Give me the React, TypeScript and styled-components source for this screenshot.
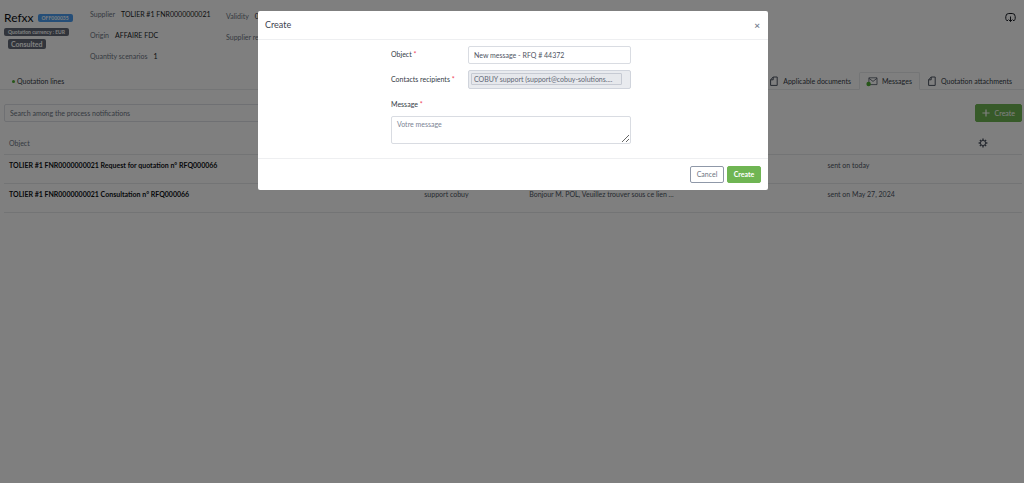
import React from "react";
import styled, { createGlobalStyle } from "styled-components";

const GlobalStyle = createGlobalStyle`
  *, *::before, *::after { box-sizing: border-box; }
  body {
    margin: 0;
    background: #fff;
    color: #3c4250;
    font-family: Lato, "Liberation Sans", sans-serif;
    font-size: 7px;
    line-height: 10px;
  }
  button, input, textarea { font: inherit; color: inherit; margin: 0; }
`;

const Page = styled.div`
  min-height: 100vh;
`;

const Header = styled.header`
  display: flex;
  align-items: flex-start;
  height: 72px;
  padding: 9px 8px 0 4px;
`;

const Identity = styled.div`
  width: 86px;
`;

const TitleRow = styled.div`
  display: flex;
  align-items: center;
  gap: 4px;
  height: 18px;
`;

const Title = styled.h1`
  margin: 0;
  font-size: 12px;
  line-height: 16px;
  font-weight: 400;
  color: #0c0f14;
`;

const Badge = styled.span<{ $tone?: "blue" | "dark"; $size?: "small" | "normal" }>`
  display: inline-block;
  padding: 0 ${(p) => (p.$size === "normal" ? 3 : 4)}px;
  border-radius: 2px;
  background: ${(p) => (p.$tone === "blue" ? "#4a9df0" : "#626976")};
  color: #fff;
  font-size: ${(p) => (p.$size === "normal" ? 7 : 5)}px;
  line-height: ${(p) => (p.$size === "normal" ? 10 : 8)}px;
  font-weight: 700;
  white-space: nowrap;
`;

const BadgeStack = styled.div`
  display: flex;
  flex-direction: column;
  align-items: flex-start;
  gap: 3px;
  padding-top: 1px;
`;

const Indent = styled.div`
  display: flex;
  padding-left: 4px;
`;

const Facts = styled.dl<{ $wide?: boolean; $low?: boolean }>`
  display: flex;
  flex-direction: column;
  gap: 11px;
  margin: 0;
  padding-top: ${(p) => (p.$low ? 2 : 0)}px;
  width: ${(p) => (p.$wide ? 136 : 120)}px;
`;

const Fact = styled.div`
  display: flex;
  gap: 6px;
  white-space: nowrap;
`;

const FactName = styled.dt`
  color: #6c7482;
`;

const FactValue = styled.dd`
  margin: 0;
  color: #181c24;
`;

const IconButton = styled.button`
  display: flex;
  margin: 3px 0 0 auto;
  padding: 0;
  border: 0;
  background: none;
  color: #181c24;
`;

const Tabs = styled.nav`
  display: flex;
  align-items: stretch;
  height: 18px;
  padding: 0 4px;
  border-bottom: 1px solid #e8eaed;
`;

const Tab = styled.a<{ $active?: boolean; $push?: boolean }>`
  display: flex;
  align-items: center;
  gap: 5px;
  height: 18px;
  margin-left: ${(p) => (p.$push ? "auto" : "0")};
  padding: 0 7px;
  border: 1px solid ${(p) => (p.$active ? "#e8eaed" : "transparent")};
  border-bottom-color: ${(p) => (p.$active ? "#fff" : "transparent")};
  border-radius: 2px 2px 0 0;
  color: #343a46;
  text-decoration: none;
  white-space: nowrap;
`;

const Dot = styled.span`
  width: 3px;
  height: 3px;
  margin-right: -3px;
  border-radius: 50%;
  background: #4fae32;
`;

const Toolbar = styled.div`
  display: flex;
  justify-content: space-between;
  padding: 14px 2px 0 4px;
`;

const SearchBox = styled.input`
  width: 36%;
  height: 18px;
  padding: 0 5px;
  border: 1px solid #dfe1e6;
  border-radius: 2px;
  background: #fff;
  &::placeholder { color: #6c7482; opacity: 1; }
`;

const Button = styled.button<{ $outline?: boolean; $compact?: boolean }>`
  display: flex;
  align-items: center;
  justify-content: center;
  gap: 5px;
  min-width: 34px;
  height: ${(p) => (p.$compact ? 17 : 18)}px;
  padding: 0 ${(p) => (p.$compact ? 4 : 6)}px ${(p) => (p.$compact ? 1 : 0)}px;
  border: 1px solid ${(p) => (p.$outline ? "#8f98a8" : "#6fb553")};
  border-radius: 2px;
  background: ${(p) => (p.$outline ? "#fff" : "#6fb553")};
  color: ${(p) => (p.$outline ? "#6c7482" : "#fff")};
  font-weight: ${(p) => (p.$compact && !p.$outline ? 700 : 400)};
`;

const Table = styled.table`
  width: calc(100% - 6px);
  margin: 10px 2px 0 4px;
  border-collapse: collapse;
  table-layout: fixed;
`;

const HeadCell = styled.th<{ $width?: string }>`
  width: ${(p) => p.$width ?? "auto"};
  height: 22px;
  padding: 0 5px;
  border-bottom: 1px solid #e6e8eb;
  color: #6c7482;
  font-weight: 400;
  text-align: left;
  svg { display: block; }
`;

const Cell = styled.td<{ $strong?: boolean }>`
  height: 29px;
  padding: 5px 5px 0;
  border-bottom: 1px solid #e6e8eb;
  color: ${(p) => (p.$strong ? "#0c0f14" : "#4d5462")};
  font-weight: ${(p) => (p.$strong ? 700 : 400)};
  vertical-align: top;
  white-space: nowrap;
`;

const Backdrop = styled.div`
  position: fixed;
  inset: 0;
  display: flex;
  align-items: flex-start;
  justify-content: center;
  padding: 11px 0 0 2px;
  background: rgba(0, 0, 0, 0.5);
`;

const Dialog = styled.section`
  width: 510px;
  max-width: 100%;
  border-radius: 2px;
  background: #fff;
`;

const DialogHeader = styled.div`
  display: flex;
  align-items: center;
  justify-content: space-between;
  height: 29px;
  padding: 0 8px 1px 7px;
  border-bottom: 1px solid #eeeff1;
`;

const DialogTitle = styled.h2`
  margin: 0;
  font-size: 9px;
  line-height: 14px;
  font-weight: 400;
`;

const CloseButton = styled.button`
  padding: 0;
  border: 0;
  background: none;
  color: #7b8494;
  font-size: 10px;
  line-height: 10px;
  font-weight: 700;
`;

const DialogBody = styled.div`
  display: flex;
  justify-content: center;
  padding: 6px 4px 14px 0;
`;

const Form = styled.form`
  display: flex;
  flex-direction: column;
  width: 240px;
`;

const FieldRow = styled.div`
  display: grid;
  grid-template-columns: 77px 1fr;
  align-items: center;
  margin-bottom: 6px;
`;

const Label = styled.label`
  padding-bottom: 2px;
  color: #343a46;
`;

const Star = styled.span`
  color: #f0405a;
`;

const TextInput = styled.input`
  width: 100%;
  height: 18px;
  padding: 0 5px;
  border: 1px solid #d9dce2;
  border-radius: 2px;
  background: #fff;
  color: #4d5462;
`;

const Recipients = styled.div`
  display: flex;
  align-items: center;
  height: 19px;
  padding: 0 2px 1px;
  border: 1px solid #d0d4dc;
  border-radius: 2px;
  background: #e9ebef;
`;

const Chip = styled.input`
  width: 151px;
  height: 12px;
  padding: 0 2px;
  border: 1px solid #c6cad3;
  border-radius: 1px;
  background: #e6e8ec;
  color: #5f6775;
`;

const MessageField = styled.div`
  display: flex;
  flex-direction: column;
  gap: 5px;
  padding-top: 4px;
`;

const MessageBox = styled.textarea`
  display: block;
  width: 100%;
  height: 28px;
  padding: 2px 5px;
  border: 1px solid #d9dce2;
  border-radius: 2px;
  &::placeholder { color: #7b8494; opacity: 1; }
`;

const DialogFooter = styled.div`
  display: flex;
  justify-content: flex-end;
  gap: 3px;
  padding: 7px;
  border-top: 1px solid #eeeff1;
`;

const DownloadIcon = () => (
  <svg width="11" height="11" viewBox="0 0 11 11" fill="none" stroke="currentColor" strokeWidth="1">
    <path d="M3 8.5H1.8Q.8 8 .8 6.6V4.6Q.8 1.5 3.8 1.5H7.2Q10.2 1.5 10.2 4.6V6.6Q10.2 8 9.2 8.5H8M5.5 4.5V9.5M3.6 7.5L5.5 9.5L7.4 7.5" />
  </svg>
);

const FileIcon = () => (
  <svg width="8" height="10" viewBox="0 0 8 10" fill="none" stroke="#4d5462" strokeWidth="1">
    <path d="M3.2 1H7.2V9.4H.6V3.8ZM3.2 1V3.8H.6" />
  </svg>
);

const MailIcon = () => (
  <svg width="10" height="10" viewBox="0 0 10 10" fill="none" overflow="visible">
    <path d="M1.9 1.8H10V8.6H1.9ZM1.9 2.3L6 5.4L10 2.3" stroke="#4d5462" strokeWidth="0.8" />
    <circle cx="1.6" cy="8" r="2.2" fill="#4fae32" />
  </svg>
);

const PlusIcon = () => (
  <svg width="8" height="8" viewBox="0 0 8 8" stroke="currentColor" strokeWidth="1.2">
    <path d="M4 .4V7.6M.4 4H7.6" />
  </svg>
);

const GearIcon = () => (
  <svg width="10" height="10" viewBox="0 0 10 10" fill="none" stroke="#4d5462">
    <circle cx="5" cy="5" r="2.6" strokeWidth="1" />
    <path d="M5 .6V2.4M5 7.6V9.4M.6 5H2.4M7.6 5H9.4M1.9 1.9L3.2 3.2M6.8 6.8L8.1 8.1M8.1 1.9L6.8 3.2M3.2 6.8L1.9 8.1" strokeWidth="1.4" />
  </svg>
);

const messages = [
  {
    object: "TOLIER #1 FNR0000000021 Request for quotation n° RFQ000066",
    from: "support cobuy",
    text: "Bonjour M. POL, Veuillez trouver sous ce lien ...",
    date: "sent on today",
  },
  {
    object: "TOLIER #1 FNR0000000021 Consultation n° RFQ000066",
    from: "support cobuy",
    text: "Bonjour M. POL, Veuillez trouver sous ce lien ...",
    date: "sent on May 27, 2024",
  },
];

export default function App() {
  return (
    <>
      <GlobalStyle />
      <Page>
        <Header>
          <Identity>
            <TitleRow>
              <Title>Refxx</Title>
              <Badge $tone="blue">OFF000035</Badge>
            </TitleRow>
            <BadgeStack>
              <Badge>Quotation currency : EUR</Badge>
              <Indent>
                <Badge $size="normal">Consulted</Badge>
              </Indent>
            </BadgeStack>
          </Identity>
          <Facts $wide>
            <Fact><FactName>Supplier</FactName><FactValue>TOLIER #1 FNR0000000021</FactValue></Fact>
            <Fact><FactName>Origin</FactName><FactValue>AFFAIRE FDC</FactValue></Fact>
            <Fact><FactName>Quantity scenarios</FactName><FactValue>1</FactValue></Fact>
          </Facts>
          <Facts $low>
            <Fact><FactName>Validity</FactName><FactValue>05/27/2024</FactValue></Fact>
            <Fact><FactName>Supplier reference</FactName></Fact>
          </Facts>
          <IconButton aria-label="Download"><DownloadIcon /></IconButton>
        </Header>
        <Tabs>
          <Tab href="#lines"><Dot />Quotation lines</Tab>
          <Tab href="#documents" $push><FileIcon />Applicable documents</Tab>
          <Tab href="#messages" $active><MailIcon />Messages</Tab>
          <Tab href="#attachments"><FileIcon />Quotation attachments</Tab>
        </Tabs>
        <Toolbar>
          <SearchBox aria-label="Search" placeholder="Search among the process notifications" />
          <Button><PlusIcon />Create</Button>
        </Toolbar>
        <Table>
          <thead>
            <tr>
              <HeadCell $width="40.8%">Object</HeadCell>
              <HeadCell $width="10.3%" />
              <HeadCell $width="29.3%" />
              <HeadCell $width="14.8%" />
              <HeadCell><GearIcon /></HeadCell>
            </tr>
          </thead>
          <tbody>
            {messages.map((m) => (
              <tr key={m.object}>
                <Cell $strong>{m.object}</Cell>
                <Cell>{m.from}</Cell>
                <Cell>{m.text}</Cell>
                <Cell>{m.date}</Cell>
                <Cell />
              </tr>
            ))}
          </tbody>
        </Table>
      </Page>
      <Backdrop>
        <Dialog role="dialog" aria-modal="true" aria-labelledby="dialog-title">
          <DialogHeader>
            <DialogTitle id="dialog-title">Create</DialogTitle>
            <CloseButton aria-label="Close">×</CloseButton>
          </DialogHeader>
          <DialogBody>
            <Form id="message-form">
              <FieldRow>
                <Label htmlFor="object">Object <Star>*</Star></Label>
                <TextInput id="object" defaultValue="New message - RFQ # 44372" />
              </FieldRow>
              <FieldRow>
                <Label htmlFor="recipients">Contacts recipients <Star>*</Star></Label>
                <Recipients>
                  <Chip id="recipients" readOnly value="COBUY support (support@cobuy-solutions...." />
                </Recipients>
              </FieldRow>
              <MessageField>
                <Label htmlFor="message">Message <Star>*</Star></Label>
                <MessageBox id="message" placeholder="Votre message" />
              </MessageField>
            </Form>
          </DialogBody>
          <DialogFooter>
            <Button $outline $compact type="button">Cancel</Button>
            <Button $compact form="message-form" type="button">Create</Button>
          </DialogFooter>
        </Dialog>
      </Backdrop>
    </>
  );
}
